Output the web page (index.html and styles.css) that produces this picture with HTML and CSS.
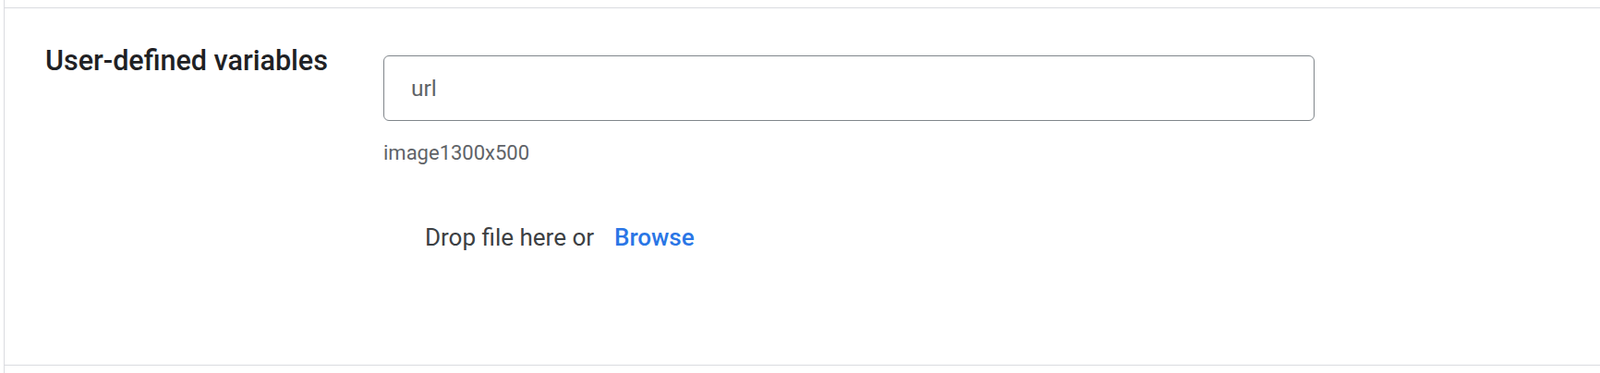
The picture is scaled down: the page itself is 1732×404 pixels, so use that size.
FILE: index.html
```html
<html>
    <head>
        <link rel="stylesheet" href="styles.css">
    </head>
    <body>
        <div class="page">
            <div class="section">
                <div class="field-label">User-defined variables</div>
                <div class="field-body">
                    <input type="text" class="text-input" value="url">
                    <div class="hint">image1300x500</div>
                    <div class="drop-zone">
                        <span class="drop-text">Drop file here or</span>
                        <button class="browse">Browse</button>
                    </div>
                </div>
            </div>
        </div>
    </body>
</html>
```

FILE: styles.css
```css
body {
    margin: 0;
    background: #ffffff;
    font-family: Roboto, "Liberation Sans", Arial, sans-serif;
}
.page {
    margin-left: 4px;
    border-left: 1px solid #dadce0;
    min-height: 404px;
    padding-top: 8px;
    box-sizing: border-box;
}
.section {
    display: flex;
    border-top: 1px solid #dadce0;
    border-bottom: 1px solid #dadce0;
    padding: 39px 0 122px 44px;
}
.field-label {
    width: 366px;
    font-size: 30.5px;
    line-height: 36px;
    font-weight: 500;
    color: #202124;
}
.field-body {
    padding-top: 12px;
}
.text-input {
    display: block;
    width: 1008px;
    height: 71px;
    box-sizing: border-box;
    border: 1px solid #80868b;
    border-radius: 6px;
    padding: 0 0 0 29px;
    font-family: Roboto, "Liberation Sans", Arial, sans-serif;
    font-size: 24.5px;
    color: #5f6368;
    outline: none;
}
.hint {
    margin-top: 21px;
    font-size: 22px;
    line-height: 28px;
    color: #5f6368;
}
.drop-zone {
    margin-top: 61px;
    padding-left: 45px;
    display: flex;
    align-items: center;
    font-size: 26px;
    line-height: 32px;
}
.drop-text {
    color: #3c4043;
}
.browse {
    margin-left: 22px;
    padding: 0;
    border: none;
    background: none;
    font-family: Roboto, "Liberation Sans", Arial, sans-serif;
    font-size: 26px;
    line-height: 32px;
    font-weight: 500;
    color: #2a76e6;
    cursor: pointer;
}
```
